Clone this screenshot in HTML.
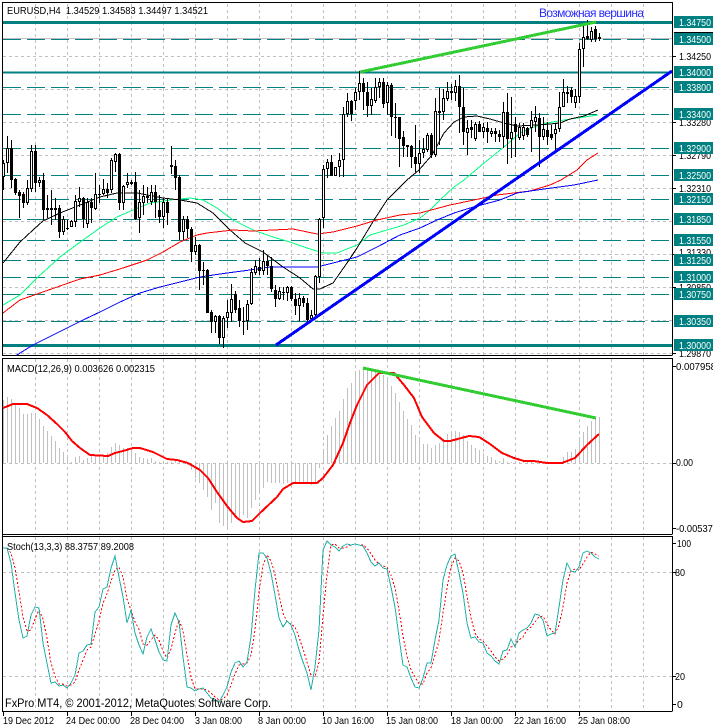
<!DOCTYPE html>
<html><head><meta charset="utf-8"><style>
html,body{margin:0;padding:0;background:#fff;width:713px;height:728px;overflow:hidden}
svg{display:block}
text{font-family:"Liberation Sans","DejaVu Sans",sans-serif;font-size:10px;fill:#000}
.l{fill:#fff;font-size:10.5px}
.a{font-size:10.5px}
line,polyline,path,rect{shape-rendering:crispEdges}
</style></head><body>
<svg width="713" height="728" viewBox="0 0 713 728" xmlns="http://www.w3.org/2000/svg">
<rect width="713" height="728" fill="#fff"/>
<g fill="none" stroke="#c0c0c0" stroke-dasharray="3 3">
<path d="M35.5 4V355M67.5 4V355M99.5 4V355M131.5 4V355M163.5 4V355M195.5 4V355M227.5 4V355M259.5 4V355M291.5 4V355M323.5 4V355M355.5 4V355M387.5 4V355M419.5 4V355M451.5 4V355M483.5 4V355M515.5 4V355M547.5 4V355M579.5 4V355M611.5 4V355M643.5 4V355"/>
<path d="M35.5 359V534M67.5 359V534M99.5 359V534M131.5 359V534M163.5 359V534M195.5 359V534M227.5 359V534M259.5 359V534M291.5 359V534M323.5 359V534M355.5 359V534M387.5 359V534M419.5 359V534M451.5 359V534M483.5 359V534M515.5 359V534M547.5 359V534M579.5 359V534M611.5 359V534M643.5 359V534"/>
<path d="M35.5 537V711M67.5 537V711M99.5 537V711M131.5 537V711M163.5 537V711M195.5 537V711M227.5 537V711M259.5 537V711M291.5 537V711M323.5 537V711M355.5 537V711M387.5 537V711M419.5 537V711M451.5 537V711M483.5 537V711M515.5 537V711M547.5 537V711M579.5 537V711M611.5 537V711M643.5 537V711"/>
<path d="M3 56.5H672M3 89.5H672M3 122.5H672M3 155.5H672M3 188.5H672M3 221.5H672M3 254.5H672M3 287.5H672M3 320.5H672M3 353.5H672M3 463.5H672M3 572.5H672M3 676.5H672"/>
</g>
<path d="M3 38.5H672" stroke="#c0c0c0"/>
<g fill="none" stroke="#008080">
<path d="M3 39.5H672M3 87.5H672M3 114.5H672M3 148.5H672M3 175.5H672M3 199.5H672M3 219.5H672M3 240.5H672M3 260.5H672M3 277.5H672M3 294.5H672M3 321.5H672" stroke-dasharray="18 6"/>
<path d="M3 22.5H672M3 345.5H672" stroke-width="3"/>
<path d="M3 72.5H672" stroke-width="2"/>
</g>
<g fill="none" stroke-width="1">
<polyline stroke="#00ff7f" points="3,305 20,295 38,277 60,257 83,240 100,228 117,217 133,210 150,203 170,200 190,198 203,200 217,208 233,220 253,230 273,237 290,242 307,248 323,253 337,253 357,245 370,235 387,230 404,225 420,218 430,210 440,200 454,187 464,180 484,163 504,147 520,133 534,127 547,123 564,120 584,117 598,115"/>
<polyline stroke="#000" points="3,263 20,242 33,230 43,221 60,213 80,205 100,197 117,193 137,193 163,198 180,200 197,203 213,213 230,230 245,243 263,252 283,267 300,278 313,289 320,289 333,283 347,263 357,248 374,220 387,200 397,190 407,180 419,170 432,155 444,133 454,122 464,117 477,116 490,119 504,123 517,126 537,125 550,124 560,123 570,119 584,116 598,110"/>
<polyline stroke="#f00" points="3,313 20,300 40,293 60,286 80,279 100,275 123,268 147,260 163,252 180,242 197,235 207,233 233,230 253,231 293,229 317,234 333,232 357,226 377,220 400,215 420,213 450,205 474,200 497,195 530,191 550,185 561,180 577,170 587,160 598,153"/>
<polyline stroke="#00f" points="10,358 17,355 33,345 57,333 83,320 100,312 120,302 140,293 160,287 180,282 200,277 227,273 250,270 270,267 317,267 333,263 357,257 377,247 400,235 420,228 437,220 454,213 470,208 500,200 517,193 544,189 574,185 598,180"/>
</g>
<!-- candle wicks -->
<path fill="none" stroke="#000" d="M3.5 160V190M7.5 136V173M11.5 140V188M15.5 178V195M19.5 190V218M23.5 192V208M27.5 180V205M31.5 145V192M35.5 145V192M39.5 177V187M43.5 173V220M47.5 195V218M51.5 190V225M55.5 198V220M59.5 205V238M63.5 216V235M67.5 220V230M71.5 220V227M75.5 195V227M79.5 187V207M83.5 197V228M87.5 198V228M91.5 198V223M95.5 173V210M99.5 185V203M103.5 179V195M107.5 183V198M111.5 158V193M115.5 153V172M119.5 153V210M123.5 185V210M127.5 173V188M131.5 180V185M135.5 172V220M139.5 190V233M143.5 185V215M147.5 187V203M151.5 185V205M155.5 185V218M159.5 195V223M163.5 198V228M167.5 198V225M171.5 146V174M175.5 160V190M179.5 175V240M183.5 216V240M187.5 216V238M191.5 227V262M195.5 237V255M199.5 244V290M203.5 262V285M207.5 269V313M211.5 310V333M215.5 315V333M219.5 315V344M223.5 316V348M227.5 300V328M231.5 284V322M235.5 291V313M239.5 300V327M243.5 307V335M247.5 300V330M251.5 268V305M255.5 260V275M259.5 258V275M263.5 250V275M267.5 256V275M271.5 257V292M275.5 285V307M279.5 287V300M283.5 287V300M287.5 286V301M291.5 286V301M295.5 293V315M299.5 293V321M303.5 296V307M307.5 298V322M311.5 310V320M315.5 275V317M319.5 218V283M323.5 165V228M327.5 159V178M331.5 155V176M335.5 167V176M339.5 153V177M343.5 107V177M347.5 93V117M351.5 100V121M355.5 88V110M359.5 71V100M363.5 78V110M367.5 82V117M371.5 88V115M375.5 78V103M379.5 78V98M383.5 78V108M387.5 82V115M391.5 83V136M395.5 103V138M399.5 117V167M403.5 131V157M407.5 145V157M411.5 145V168M415.5 125V172M419.5 140V173M423.5 138V158M427.5 133V152M431.5 133V158M435.5 98V157M439.5 88V145M443.5 89V120M447.5 82V101M451.5 84V100M455.5 80V101M459.5 75V133M463.5 88V145M467.5 120V155M471.5 120V138M475.5 122V141M479.5 121V132M483.5 123V138M487.5 122V143M491.5 128V137M495.5 128V142M499.5 130V142M503.5 102V148M507.5 93V164M511.5 97V158M515.5 117V157M519.5 123V140M523.5 123V140M527.5 127V137M531.5 111V152M535.5 106V132M539.5 113V167M543.5 117V140M547.5 122V145M551.5 125V140M555.5 123V152M559.5 92V132M563.5 79V107M567.5 86V103M571.5 87V103M575.5 89V108M579.5 43V103M583.5 26V67M587.5 20V40M591.5 27V42M595.5 26V42M599.5 33V41"/>
<!-- candle bodies -->
<path fill="none" stroke="#000" stroke-width="3" d="M3.5 163V177M7.5 148V163M11.5 148V180M15.5 179V193M19.5 192V196M23.5 194V203M27.5 188V203M31.5 151V189M35.5 151V183M39.5 180V183M43.5 180V210M47.5 208V210M51.5 208V210M55.5 208V210M59.5 208V232M63.5 219V232M67.5 228V229M71.5 221V227M75.5 201V222M79.5 198V202M83.5 198V219M87.5 202V224M91.5 202V208M95.5 194V209M99.5 194V195M103.5 189V194M107.5 189V193M111.5 160V190M115.5 154V162M119.5 154V203M123.5 186V203M127.5 182V185M131.5 182V184M135.5 182V219M139.5 202V218M143.5 196V203M147.5 196V198M151.5 192V202M155.5 192V202M159.5 210V217M163.5 202V217M167.5 202V213M171.5 165V167M175.5 166V178M179.5 177V232M183.5 219V232M187.5 219V229M191.5 229V252M195.5 245V252M199.5 245V271M203.5 270V271M207.5 270V313M211.5 312V322M215.5 316V322M219.5 316V338M223.5 318V338M227.5 312V318M231.5 299V313M235.5 294V310M239.5 308V321M243.5 321V322M247.5 304V321M251.5 272V304M255.5 266V273M259.5 267V271M263.5 261V271M267.5 261V266M271.5 266V289M275.5 290V299M279.5 291V299M283.5 292V293M287.5 287V293M291.5 287V299M295.5 299V306M299.5 298V306M303.5 298V303M307.5 303V320M311.5 315V319M315.5 276V315M319.5 219V277M323.5 169V218M327.5 162V169M331.5 162V176M335.5 167V176M339.5 160V167M343.5 114V160M347.5 101V114M351.5 101V114M355.5 92V101M359.5 83V92M363.5 83V92M367.5 92V106M371.5 99V106M375.5 87V101M379.5 82V87M383.5 82V104M387.5 85V103M391.5 85V117M395.5 117V118M399.5 117V139M403.5 137V146M407.5 145V147M411.5 146V157M415.5 157V164M419.5 153V164M423.5 149V153M427.5 135V150M431.5 135V155M435.5 111V155M439.5 111V113M443.5 98V112M447.5 91V99M451.5 91V93M455.5 86V93M459.5 86V107M463.5 107V132M467.5 128V133M471.5 127V130M475.5 124V139M479.5 124V132M483.5 127V132M487.5 128V132M491.5 131V134M495.5 131V134M499.5 134V137M503.5 112V137M507.5 112V139M511.5 132V139M515.5 124V132M519.5 127V138M523.5 127V136M527.5 128V135M531.5 120V128M535.5 117V122M539.5 118V137M543.5 129V137M547.5 130V137M551.5 134V138M555.5 129V134M559.5 107V129M563.5 92V107M567.5 92V94M571.5 90V97M575.5 96V103M579.5 49V97M583.5 37V49M587.5 36V39M591.5 31V40M595.5 29V39M599.5 37V39"/>
<path fill="none" stroke="#fff" d="M3.5 164V176M7.5 149V162M27.5 189V202M31.5 152V188M39.5 181V182M63.5 220V231M71.5 222V226M75.5 202V221M79.5 199V201M87.5 203V223M95.5 195V208M103.5 190V193M111.5 161V189M115.5 155V161M123.5 187V202M127.5 183V184M139.5 203V217M143.5 197V202M151.5 193V201M163.5 203V216M183.5 220V231M195.5 246V251M215.5 317V321M223.5 319V337M227.5 313V317M231.5 300V312M247.5 305V320M251.5 273V303M255.5 267V272M263.5 262V270M279.5 292V298M287.5 288V292M299.5 299V305M311.5 316V318M315.5 277V314M319.5 220V276M323.5 170V217M327.5 163V168M335.5 168V175M339.5 161V166M343.5 115V159M347.5 102V113M355.5 93V100M359.5 84V91M371.5 100V105M375.5 88V100M379.5 83V86M387.5 86V102M419.5 154V163M423.5 150V152M427.5 136V149M435.5 112V154M443.5 99V111M447.5 92V98M455.5 87V92M467.5 129V132M475.5 125V138M483.5 128V131M491.5 132V133M503.5 113V136M511.5 133V138M519.5 128V137M523.5 128V135M531.5 121V127M535.5 118V121M543.5 130V136M555.5 130V133M559.5 108V128M563.5 93V106M575.5 97V102M579.5 50V96M583.5 38V48M591.5 32V39"/>
<!-- trendlines -->
<line x1="360" y1="72" x2="596" y2="22" stroke="#32cd32" stroke-width="3"/>
<line x1="276" y1="345" x2="672" y2="71" stroke="#0000ff" stroke-width="3"/>
<!-- MACD histogram -->
<path fill="none" stroke="#c0c0c0" d="M3.5 463V400M7.5 463V397M11.5 463V399M15.5 463V405M19.5 463V408M23.5 463V414M27.5 463V414M31.5 463V413M35.5 463V414M39.5 463V419M43.5 463V426M47.5 463V431M51.5 463V436M55.5 463V441M59.5 463V448M63.5 463V452M67.5 463V457M71.5 463V462M75.5 463V457M79.5 463V456M83.5 463V460M87.5 463V458M91.5 463V456M95.5 463V457M99.5 463V456M103.5 463V455M107.5 463V453M111.5 463V447M115.5 463V443M119.5 463V445M123.5 463V448M127.5 463V448M131.5 463V450M135.5 463V453M139.5 463V457M143.5 463V458M147.5 463V459M151.5 463V458M155.5 463V461M159.5 463V462M167.5 463V462M171.5 463V462M175.5 463V461M179.5 463V461M183.5 463V462M187.5 463V465M191.5 463V470M195.5 463V478M199.5 463V483M203.5 463V490M207.5 463V497M211.5 463V510M215.5 463V503M219.5 463V523M223.5 463V526M227.5 463V527M231.5 463V523M235.5 463V518M239.5 463V518M243.5 463V515M247.5 463V518M251.5 463V508M255.5 463V500M259.5 463V493M263.5 463V488M267.5 463V482M271.5 463V483M275.5 463V483M279.5 463V483M283.5 463V484M287.5 463V483M291.5 463V483M295.5 463V483M299.5 463V483M303.5 463V483M307.5 463V483M311.5 463V485M315.5 463V483M319.5 463V468M323.5 463V450M327.5 463V435M331.5 463V426M335.5 463V418M339.5 463V411M343.5 463V399M347.5 463V388M351.5 463V383M355.5 463V374M359.5 463V370M363.5 463V368M367.5 463V368M371.5 463V370M375.5 463V372M379.5 463V375M383.5 463V375M387.5 463V378M391.5 463V386M395.5 463V393M399.5 463V402M403.5 463V411M407.5 463V419M411.5 463V425M415.5 463V435M419.5 463V440M423.5 463V444M427.5 463V444M431.5 463V448M435.5 463V445M439.5 463V443M443.5 463V441M447.5 463V434M451.5 463V432M455.5 463V431M459.5 463V432M463.5 463V435M467.5 463V441M471.5 463V445M475.5 463V448M479.5 463V450M483.5 463V453M487.5 463V456M491.5 463V457M495.5 463V460M499.5 463V461M503.5 463V458M507.5 463V462M511.5 463V462M515.5 463V462M519.5 463V462M523.5 463V462M527.5 463V462M531.5 463V462M535.5 463V462M539.5 463V462M543.5 463V462M547.5 463V462M551.5 463V462M555.5 463V462M559.5 463V462M563.5 463V457M567.5 463V452M571.5 463V452M575.5 463V449M579.5 463V440M583.5 463V432M587.5 463V426M591.5 463V421M595.5 463V418M599.5 463V417"/>
<polyline fill="none" stroke="#f00" stroke-width="2" points="3,408 13,404 27,404 37,408 47,415 57,424 65,432 72,441 80,448 90,455 108,456 115,453 123,451 133,448 140,448 153,452 167,459 177,460 188,463 200,470 208,478 217,492 227,506 237,518 243,522 252,521 260,513 277,497 283,489 293,483 317,483 323,478 333,465 343,443 350,423 357,405 367,385 379,373 394,373 404,385 414,398 422,417 434,433 444,441 450,441 469,436 479,437 490,444 502,453 514,458 524,461 534,461 547,463 562,463 575,458 587,445 599,434"/>
<line x1="363" y1="368" x2="596" y2="418" stroke="#32cd32" stroke-width="3"/>
<!-- Stoch -->
<polyline fill="none" stroke="#f00" stroke-dasharray="2 2" points="3,548 7,548 11,553 15,568 19,592 23,617 27,631 31,630 35,619 39,610 43,619 47,638 51,663 55,676 59,684 63,684 67,686 71,685 75,682 79,670 83,660 87,650 91,647 95,634 99,621 103,603 107,594 111,581 115,570 119,567 123,577 127,599 131,610 135,622 139,629 143,644 147,645 151,640 155,635 159,640 163,651 167,658 171,649 175,633 179,620 183,631 187,655 191,677 195,689 199,689 203,689 207,690 211,693 215,697 219,700 223,699 227,695 231,685 235,674 239,665 243,664 247,663 251,655 255,630 259,593 263,565 267,555 271,561 275,575 279,595 283,613 287,622 291,624 295,627 299,637 303,649 307,662 311,675 315,677 319,662 323,616 327,574 331,545 335,544 339,548 343,548 347,547 351,545 355,544 359,545 363,545 367,548 371,554 375,560 379,564 383,566 387,567 391,575 395,588 399,610 403,636 407,656 411,670 415,677 419,684 423,684 427,673 431,668 435,655 439,641 443,613 447,588 451,567 455,558 459,561 463,573 467,596 471,618 475,633 479,639 483,641 487,646 491,651 495,657 499,661 503,659 507,655 511,647 515,645 519,640 523,637 527,630 531,627 535,622 539,617 543,616 547,624 551,630 555,634 559,625 563,607 567,583 571,571 575,569 579,570 583,564 587,557 591,552 595,554 599,556"/>
<polyline fill="none" stroke="#20b2aa" points="3,548 7,548 11,563 15,593 19,620 23,638 27,636 31,615 35,607 39,608 43,643 47,663 51,683 55,682 59,686 63,685 67,688 71,683 75,675 79,653 83,651 87,645 91,644 95,612 99,607 103,589 107,587 111,568 115,556 119,577 123,597 127,623 131,610 135,633 139,645 143,654 147,637 151,629 155,640 159,652 163,660 167,661 171,625 175,613 179,622 183,657 187,687 191,688 195,691 199,689 203,688 207,693 211,698 215,700 219,702 223,695 227,687 231,672 235,663 239,661 243,667 247,662 251,637 255,590 259,553 263,553 267,558 271,573 275,595 279,618 283,627 287,621 291,625 295,635 299,650 303,662 307,673 311,690 315,667 319,630 323,550 327,541 331,545 335,547 339,551 343,546 347,544 351,545 355,544 359,545 363,546 367,553 371,562 375,566 379,563 383,568 387,569 391,587 395,607 399,637 403,665 407,667 411,678 415,687 419,688 423,678 427,663 431,663 435,640 439,620 443,580 447,565 451,556 455,554 459,573 463,593 467,623 471,638 475,637 479,642 483,643 487,653 491,656 495,661 499,664 503,651 507,650 511,639 515,647 519,633 523,630 527,628 531,623 535,614 539,615 543,620 547,636 551,634 555,633 559,607 563,580 567,563 571,571 575,572 579,567 583,553 587,551 591,553 595,557 599,559"/>
<!-- frames -->
<path fill="none" stroke="#000" d="M2.5 2V711M2 2.5H672.5M672.5 2V355M2 355.5H672.5M2 358.5H672.5M672.5 358V534M2 534.5H672.5M2 536.5H672.5M672.5 536V711M2 711.5H672.5M3.5 711V716M67.5 711V716M131.5 711V716M195.5 711V716M259.5 711V716M323.5 711V716M387.5 711V716M451.5 711V716M515.5 711V716M579.5 711V716M672 56.5H676M672 122.5H676M672 155.5H676M672 188.5H676M672 254.5H676M672 287.5H676M672 353.5H676M672 366.5H676M672 463.5H676M672 528.5H676M672 543.5H676M672 572.5H676M672 676.5H676M672 704.5H676M674 32.5H713"/>
<path fill="#fff" stroke="none" d="M0 356H672V358H0Z"/>
<!-- axis text -->
<text class="a" x="679" y="60" textLength="32" lengthAdjust="spacingAndGlyphs">1.34250</text>
<text class="a" x="679" y="126" textLength="32" lengthAdjust="spacingAndGlyphs">1.33280</text>
<text class="a" x="679" y="159" textLength="32" lengthAdjust="spacingAndGlyphs">1.32790</text>
<text class="a" x="679" y="192" textLength="32" lengthAdjust="spacingAndGlyphs">1.32310</text>
<text class="a" x="679" y="256" textLength="32" lengthAdjust="spacingAndGlyphs">1.31330</text>
<text class="a" x="679" y="291" textLength="32" lengthAdjust="spacingAndGlyphs">1.30850</text>
<text class="a" x="679" y="357" textLength="32" lengthAdjust="spacingAndGlyphs">1.29870</text>
<g fill="#008080">
<rect x="674" y="16" width="39" height="12"/><rect x="674" y="33" width="39" height="12"/><rect x="674" y="66" width="39" height="12"/><rect x="674" y="81" width="39" height="12"/><rect x="674" y="108" width="39" height="12"/><rect x="674" y="142" width="39" height="12"/><rect x="674" y="169" width="39" height="12"/><rect x="674" y="193" width="39" height="12"/><rect x="674" y="213" width="39" height="12"/><rect x="674" y="234" width="39" height="12"/><rect x="674" y="254" width="39" height="12"/><rect x="674" y="271" width="39" height="12"/><rect x="674" y="288" width="39" height="12"/><rect x="674" y="315" width="39" height="12"/><rect x="674" y="339" width="39" height="12"/>
</g>
<text class="l" x="679" y="26" textLength="32" lengthAdjust="spacingAndGlyphs">1.34750</text>
<text class="l" x="679" y="43" textLength="32" lengthAdjust="spacingAndGlyphs">1.34500</text>
<text class="l" x="679" y="76" textLength="32" lengthAdjust="spacingAndGlyphs">1.34000</text>
<text class="l" x="679" y="91" textLength="32" lengthAdjust="spacingAndGlyphs">1.33800</text>
<text class="l" x="679" y="118" textLength="32" lengthAdjust="spacingAndGlyphs">1.33400</text>
<text class="l" x="679" y="152" textLength="32" lengthAdjust="spacingAndGlyphs">1.32900</text>
<text class="l" x="679" y="179" textLength="32" lengthAdjust="spacingAndGlyphs">1.32500</text>
<text class="l" x="679" y="203" textLength="32" lengthAdjust="spacingAndGlyphs">1.32150</text>
<text class="l" x="679" y="223" textLength="32" lengthAdjust="spacingAndGlyphs">1.31850</text>
<text class="l" x="679" y="244" textLength="32" lengthAdjust="spacingAndGlyphs">1.31550</text>
<text class="l" x="679" y="264" textLength="32" lengthAdjust="spacingAndGlyphs">1.31250</text>
<text class="l" x="679" y="281" textLength="32" lengthAdjust="spacingAndGlyphs">1.31000</text>
<text class="l" x="679" y="298" textLength="32" lengthAdjust="spacingAndGlyphs">1.30750</text>
<text class="l" x="679" y="325" textLength="32" lengthAdjust="spacingAndGlyphs">1.30350</text>
<text class="l" x="679" y="349" textLength="32" lengthAdjust="spacingAndGlyphs">1.30000</text>
<text class="a" x="676" y="370" textLength="40" lengthAdjust="spacingAndGlyphs">0.007958</text>
<text class="a" x="676" y="466" textLength="17" lengthAdjust="spacingAndGlyphs">0.00</text>
<text class="a" x="676" y="532" textLength="42" lengthAdjust="spacingAndGlyphs">-0.005378</text>
<text class="a" x="677" y="547" textLength="14" lengthAdjust="spacingAndGlyphs">100</text>
<text class="a" x="675" y="576" textLength="10" lengthAdjust="spacingAndGlyphs">80</text>
<text class="a" x="675" y="680" textLength="10" lengthAdjust="spacingAndGlyphs">20</text>
<text class="a" x="677" y="708">0</text>
<text x="7" y="14" textLength="201" lengthAdjust="spacingAndGlyphs" xml:space="preserve">EURUSD,H4  1.34529 1.34583 1.34497 1.34521</text>
<text x="539" y="17" textLength="105" style="font-size:12px;fill:#2a2aff">Возможная вершина</text>
<text x="7" y="372" textLength="148" lengthAdjust="spacingAndGlyphs">MACD(12,26,9) 0.003626 0.002315</text>
<text x="7" y="550" textLength="127" lengthAdjust="spacingAndGlyphs">Stoch(13,3,3) 88.3757 89.2008</text>
<text x="5" y="707" textLength="266" lengthAdjust="spacingAndGlyphs" style="font-size:11.5px">FxPro MT4, © 2001-2012, MetaQuotes Software Corp.</text>
<text class="a" x="3" y="724" textLength="51" lengthAdjust="spacingAndGlyphs">19 Dec 2012</text>
<text class="a" x="66" y="724" textLength="54" lengthAdjust="spacingAndGlyphs">24 Dec 00:00</text>
<text class="a" x="130" y="724" textLength="54" lengthAdjust="spacingAndGlyphs">28 Dec 04:00</text>
<text class="a" x="195" y="724" textLength="47" lengthAdjust="spacingAndGlyphs">3 Jan 08:00</text>
<text class="a" x="258" y="724" textLength="48" lengthAdjust="spacingAndGlyphs">8 Jan 00:00</text>
<text class="a" x="322" y="724" textLength="52" lengthAdjust="spacingAndGlyphs">10 Jan 16:00</text>
<text class="a" x="386" y="724" textLength="52" lengthAdjust="spacingAndGlyphs">15 Jan 08:00</text>
<text class="a" x="451" y="724" textLength="52" lengthAdjust="spacingAndGlyphs">18 Jan 00:00</text>
<text class="a" x="514" y="724" textLength="52" lengthAdjust="spacingAndGlyphs">22 Jan 16:00</text>
<text class="a" x="578" y="724" textLength="52" lengthAdjust="spacingAndGlyphs">25 Jan 08:00</text>
</svg>
</body></html>
